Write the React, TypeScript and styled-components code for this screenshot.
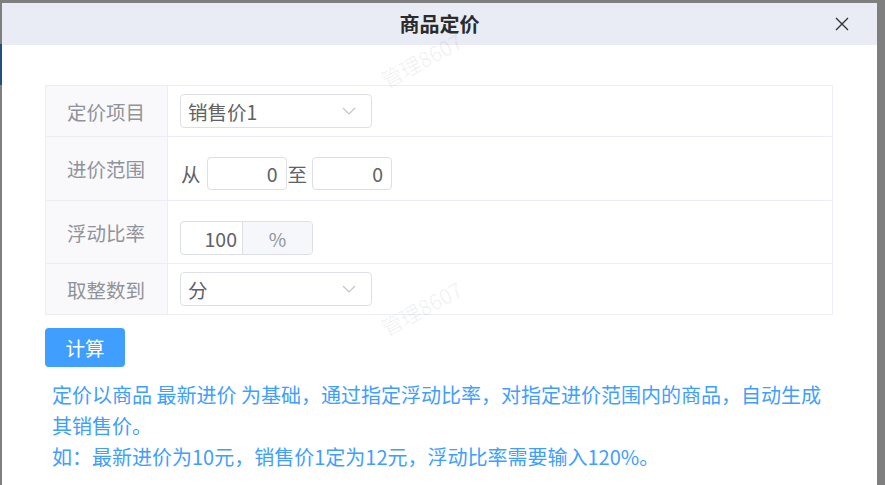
import styled, { createGlobalStyle } from 'styled-components';

const GlobalStyle = createGlobalStyle`
  html, body {
    margin: 0;
    padding: 0;
    height: 100%;
    overflow: hidden;
  }

  body {
    background: linear-gradient(#21507f, #21507f) 0 44px / 2px 41px no-repeat, #7f7f7f;
    font-family: 'Microsoft YaHei', 'Noto Sans CJK SC', sans-serif;
  }
`;

const Modal = styled.div`
  position: relative;
  width: 875px;
  height: 500px;
  margin: 3px 0 0 2px;
  background: #fff;
`;

const Header = styled.div`
  height: 42px;
  display: flex;
  align-items: center;
  justify-content: center;
  background: #e9ecf4;
  position: relative;

  h2 {
    margin: 0;
    font-size: 20px;
    font-weight: 700;
    color: #2b2b2b;
    line-height: 1;
  }
`;

const Close = styled.button`
  position: absolute;
  right: 27px;
  top: 13px;
  width: 16px;
  height: 16px;
  padding: 0;
  border: none;
  background: none;
  display: flex;
`;

const Body = styled.div`
  padding: 40px 44px 0 43px;
`;

const Table = styled.div`
  display: grid;
  grid-template-columns: 122px 1fr;
  border: 1px solid #ebeef5;
  border-bottom: none;
`;

const Label = styled.div`
  display: flex;
  align-items: center;
  padding-left: 21px;
  background: #f9f9fb;
  border-right: 1px solid #ebeef5;
  border-bottom: 1px solid #ebeef5;
  font-size: 19.5px;
  color: #909399;
`;

const Cell = styled.div<{ $top: number; $bottom: number }>`
  display: flex;
  align-items: center;
  padding: ${(p) => p.$top}px 12px ${(p) => p.$bottom}px;
  border-bottom: 1px solid #ebeef5;
  font-size: 19.5px;
  color: #606266;
`;

const Select = styled.div`
  box-sizing: border-box;
  width: 192px;
  height: 34px;
  display: flex;
  align-items: center;
  justify-content: space-between;
  padding: 0 15px 0 7px;
  border: 1px solid #dcdfe6;
  border-radius: 4px;
  font-size: 19.5px;
  color: #606266;
`;

const Input = styled.div<{ $width: number }>`
  box-sizing: border-box;
  width: ${(p) => p.$width}px;
  height: 33px;
  display: flex;
  align-items: center;
  justify-content: flex-end;
  padding-right: 8px;
  border: 1px solid #dcdfe6;
  border-radius: 4px;
  font-size: 19.5px;
  color: #606266;
`;

const Word = styled.span<{ $after: number }>`
  padding: 0 ${(p) => p.$after}px 0 1px;
`;

const Group = styled.div`
  display: flex;
  height: 34px;
  box-sizing: border-box;
  border: 1px solid #dcdfe6;
  border-radius: 4px;
  overflow: hidden;
`;

const GroupInput = styled.div`
  width: 62px;
  display: flex;
  align-items: center;
  justify-content: flex-end;
  padding-right: 5px;
  box-sizing: border-box;
  border-right: 1px solid #dcdfe6;
  font-size: 19.5px;
  color: #606266;
`;

const Append = styled.div`
  width: 69px;
  display: flex;
  align-items: center;
  justify-content: center;
  background: #f5f7fa;
  font-size: 19px;
  color: #909399;
`;

const Button = styled.button`
  margin-top: 13px;
  width: 80px;
  height: 39px;
  border: none;
  border-radius: 4px;
  background: #409eff;
  color: #fff;
  font-family: inherit;
  font-size: 19.5px;
`;

const Help = styled.div`
  margin-top: 12px;
  padding: 0 0 0 7px;
  width: 775px;
  font-size: 20px;
  line-height: 31px;
  color: #409eff;

  p {
    margin: 0;
  }
`;

const Watermark = styled.div<{ $top: number }>`
  position: absolute;
  left: 375px;
  top: ${(p) => p.$top}px;
  font-size: 21px;
  color: rgba(0, 0, 0, 0.06);
  transform: rotate(-28deg);
  pointer-events: none;
  white-space: nowrap;
`;

const Chevron = () => (
  <svg width="14" height="8" viewBox="0 0 14 8">
    <path d="M1 1l6 6 6-6" fill="none" stroke="#c0c4cc" strokeWidth="1.2" />
  </svg>
);

const App = () => (
  <>
    <GlobalStyle />
    <Modal>
      <Header>
        <h2>商品定价</h2>
        <Close>
          <svg width="16" height="16" viewBox="0 0 16 16">
            <path d="M2 2l12 12M14 2L2 14" stroke="#333" strokeWidth="1.4" />
          </svg>
        </Close>
      </Header>
      <Body>
        <Table>
          <Label>定价项目</Label>
          <Cell $top={8} $bottom={8}>
            <Select>
              <span>销售价1</span>
              <Chevron />
            </Select>
          </Cell>
          <Label>进价范围</Label>
          <Cell $top={20} $bottom={10}>
            <Word $after={6}>从</Word>
            <Input $width={80}>0</Input>
            <Word $after={5}>至</Word>
            <Input $width={80}>0</Input>
          </Cell>
          <Label>浮动比率</Label>
          <Cell $top={20} $bottom={8}>
            <Group>
              <GroupInput>100</GroupInput>
              <Append>%</Append>
            </Group>
          </Cell>
          <Label>取整数到</Label>
          <Cell $top={8} $bottom={8}>
            <Select>
              <span>分</span>
              <Chevron />
            </Select>
          </Cell>
        </Table>
        <Button>计算</Button>
        <Help>
          <p>定价以商品 最新进价 为基础，通过指定浮动比率，对指定进价范围内的商品，自动生成其销售价。</p>
          <p>如：最新进价为10元，销售价1定为12元，浮动比率需要输入120%。</p>
        </Help>
      </Body>
      <Watermark $top={42}>管理8607</Watermark>
      <Watermark $top={290}>管理8607</Watermark>
    </Modal>
  </>
);

export default App;
